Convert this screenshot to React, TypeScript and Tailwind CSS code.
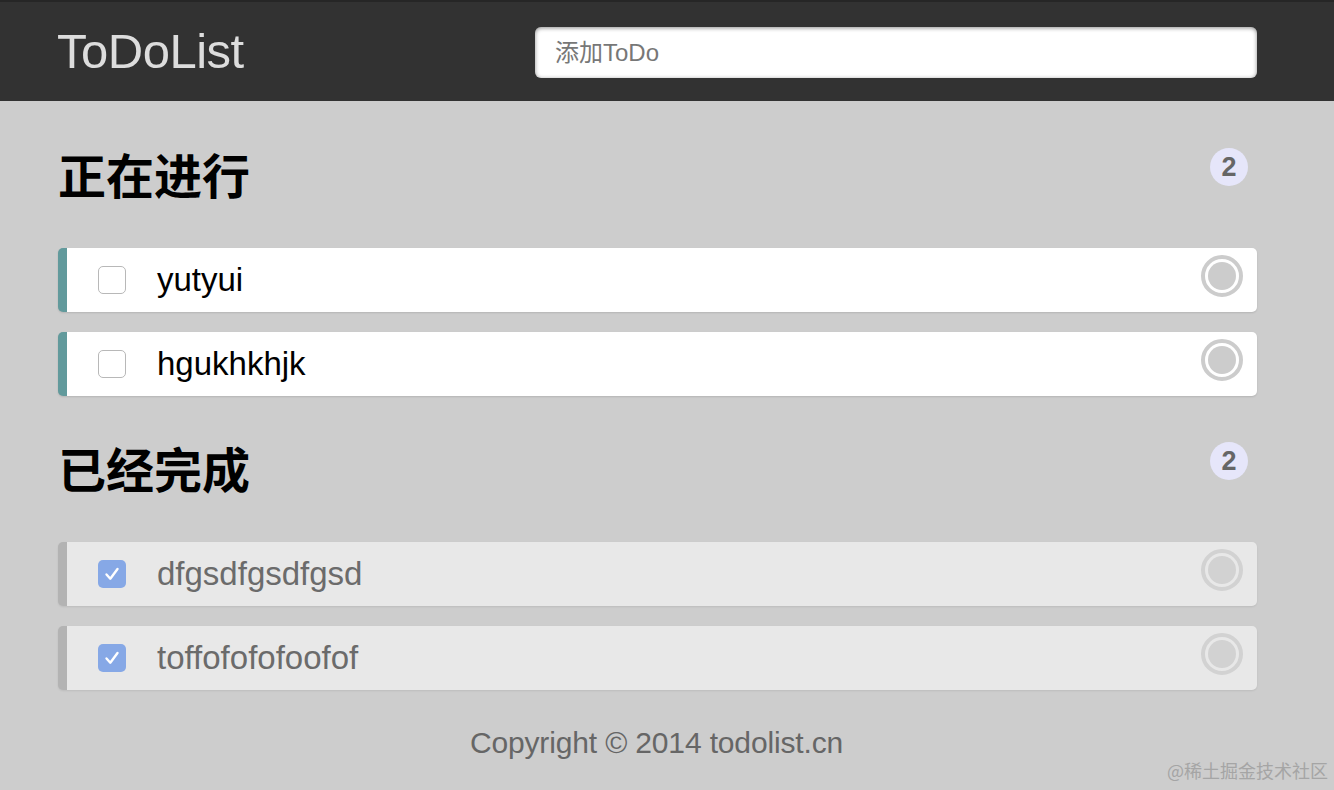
import React from "react"

type Todo = { id: number; title: string; done: boolean }

const todos: Todo[] = [
  { id: 1, title: "yutyui", done: false },
  { id: 2, title: "hgukhkhjk", done: false },
  { id: 3, title: "dfgsdfgsdfgsd", done: true },
  { id: 4, title: "toffofofofoofof", done: true },
]

function Item({ todo }: { todo: Todo }) {
  return (
    <li
      className={
        todo.done
          ? "flex h-[64px] items-center rounded-[5px] border-l-[9px] border-[#b3b3b3] bg-[#e8e8e8] pl-[31px] pr-[14px] shadow-[0_1px_2px_rgba(0,0,0,0.08)]"
          : "flex h-[64px] items-center rounded-[5px] border-l-[9px] border-[#629a9c] bg-white pl-[31px] pr-[14px] shadow-[0_1px_2px_rgba(0,0,0,0.12)]"
      }
    >
      {todo.done ? (
        <span className="flex h-[28px] w-[28px] items-center justify-center rounded-[5px] bg-[#86a8e6]">
          <svg width="20" height="20" viewBox="0 0 20 20" fill="none">
            <path d="M4.5 10.5l3.8 4.2L15.5 5" stroke="white" strokeWidth="2.4" strokeLinecap="round" strokeLinejoin="round" />
          </svg>
        </span>
      ) : (
        <span className="h-[28px] w-[28px] rounded-[5px] border border-[#b8b8b8] bg-white" />
      )}
      <span className={todo.done ? "ml-[31px] flex-1 text-[33px] text-[#6b6b6b]" : "ml-[31px] flex-1 text-[33px] text-black"}>
        {todo.title}
      </span>
      <span
        className={
          todo.done
            ? "-mt-[8px] flex h-[42px] w-[42px] items-center justify-center rounded-full border-[4px] border-[#d2d2d2] p-[3px]"
            : "-mt-[8px] flex h-[42px] w-[42px] items-center justify-center rounded-full border-[4px] border-[#cccccc] p-[3px]"
        }
      >
        <span className={todo.done ? "h-full w-full rounded-full bg-[#d2d2d2]" : "h-full w-full rounded-full bg-[#cccccc]"} />
      </span>
    </li>
  )
}

function Section({ title, items }: { title: string; items: Todo[] }) {
  return (
    <section>
      <div className="mb-[46px] flex h-[54px] items-start justify-between pr-[9px]">
        <h2 className="-mt-[2px] font-['Noto_Sans_CJK_SC',sans-serif] text-[48px] font-bold leading-[54px] text-black">{title}</h2>
        <span className="flex h-[38px] w-[38px] items-center justify-center rounded-full bg-[#e6e6fa] text-[27px] font-bold text-[#666]">
          {items.length}
        </span>
      </div>
      <ul className="flex flex-col gap-[20px]">
        {items.map((t) => (
          <Item key={t.id} todo={t} />
        ))}
      </ul>
    </section>
  )
}

export default function App() {
  return (
    <div className="relative min-h-screen bg-[#cdcdcd] font-['Liberation_Sans','Noto_Sans_CJK_SC',sans-serif]">
      <header className="h-[101px] border-t-2 border-[#262626] bg-[#323232]">
        <div className="ml-[57px] flex h-full w-[1200px] items-center justify-between">
          <h1 className="text-[49px] tracking-[-0.5px] text-[#dddddd]">ToDoList</h1>
          <input
            placeholder="添加ToDo"
            className="mt-[2px] h-[51px] w-[722px] rounded-[6px] bg-white px-[20px] text-[24px] text-black shadow-[inset_0_1px_4px_rgba(0,0,0,0.45)] outline-none placeholder:text-[#777]"
          />
        </div>
      </header>

      <main className="ml-[58px] flex w-[1199px] flex-col gap-[46px] pt-[47px]">
        <Section title="正在进行" items={todos.filter((t) => !t.done)} />
        <Section title="已经完成" items={todos.filter((t) => t.done)} />
      </main>

      <footer className="mt-[30px] w-[1313px] text-center text-[30px] tracking-[-0.15px] text-[#666]">Copyright © 2014 todolist.cn</footer>

      <span className="absolute bottom-[6px] right-[6px] font-['Noto_Sans_CJK_SC',sans-serif] text-[18px] text-[#a5a5a5]">@稀土掘金技术社区</span>
    </div>
  )
}
